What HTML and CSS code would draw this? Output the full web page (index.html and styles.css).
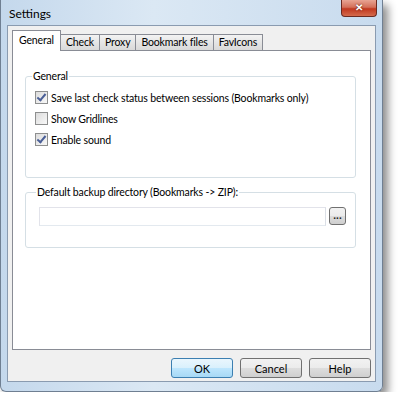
FILE: index.html
```html
<!DOCTYPE html>
<html lang="en">
<head>
  <meta charset="UTF-8" />
  <title>Settings</title>
  <link rel="stylesheet" href="styles.css">
</head>
<body>
  <div class="window">
    <div class="titlebar">
      <span class="title">Settings</span>
      <button class="close">&#x2715;</button>
    </div>
    <div class="client">
      <div class="tabs">
        <div class="tab active">General</div>
        <div class="tab">Check</div>
        <div class="tab">Proxy</div>
        <div class="tab">Bookmark files</div>
        <div class="tab">FavIcons</div>
      </div>
      <div class="panel">
        <fieldset class="group general">
          <legend>General</legend>
          <div class="checks">
            <label class="check"><span class="box on"></span>Save last check status between sessions (Bookmarks only)</label>
            <label class="check"><span class="box"></span>Show Gridlines</label>
            <label class="check"><span class="box on"></span>Enable sound</label>
          </div>
        </fieldset>
        <fieldset class="group backup">
          <legend>Default backup directory (Bookmarks -&gt; ZIP):</legend>
          <div class="dir-row">
            <div class="field"></div>
            <button class="browse">...</button>
          </div>
        </fieldset>
      </div>
      <div class="actions">
        <button class="btn default">OK</button>
        <button class="btn">Cancel</button>
        <button class="btn">Help</button>
      </div>
    </div>
  </div>
</body>
</html>
```

FILE: styles.css
```css
body {
  margin: 0;
  background: #fff;
  font-family: Lato, "Liberation Sans", sans-serif;
  font-size: 10.5px;
  letter-spacing: -0.15px;
  color: #000;
}
.window {
  width: 383px;
  height: 392px;
  box-sizing: border-box;
  background: linear-gradient(90deg, #c4d8ec 0, #dbe8f4 40%, #c8dbee 100%);
  border: 1px solid #6f7f92;
  border-top: none;
  border-radius: 0 0 6px 6px;
  box-shadow: 5px 5px 9px rgba(0, 0, 0, 0.45);
  display: flex;
  flex-direction: column;
}
.titlebar {
  height: 25px;
  display: flex;
  align-items: flex-start;
  justify-content: space-between;
  padding-left: 8px;
}
.title {
  margin-top: 6px;
  font-size: 12px;
  letter-spacing: 0;
}
.close {
  width: 36px;
  height: 17px;
  margin-right: 5px;
  border: 1px solid #6b2a20;
  border-top: none;
  border-radius: 0 0 4px 4px;
  background: linear-gradient(#e8a493 0, #d4705a 45%, #c1381f 55%, #d46a4c 100%);
  color: #fff;
  font-size: 10px;
  font-weight: bold;
  line-height: 14px;
  padding: 0;
  text-shadow: 0 0 2px #4a1006;
}
.client {
  margin: 0 6px;
  height: 357px;
  box-sizing: border-box;
  background: #f0f0f0;
  border: 1px solid #8a9bb0;
  padding: 4px 4px 0 4px;
  display: flex;
  flex-direction: column;
}
.tabs {
  display: flex;
  align-items: flex-end;
  height: 20px;
  position: relative;
  z-index: 1;
}
.tab {
  height: 16px;
  box-sizing: border-box;
  padding: 0 5px;
  border: 1px solid #898c95;
  border-bottom: none;
  margin-left: -1px;
  background: linear-gradient(#f3f3f3, #e5e5e5 50%, #d9d9d9);
  line-height: 15px;
}
.tab:first-child {
  margin-left: 0;
}
.tab.active {
  height: 21px;
  margin-bottom: -1px;
  background: #fff;
  padding: 0 6px;
  line-height: 18px;
}
.panel {
  height: 300px;
  box-sizing: border-box;
  background: #fff;
  border: 1px solid #898c95;
  padding: 19px 14px 0 12px;
  display: flex;
  flex-direction: column;
  gap: 8px;
}
.group {
  margin: 0;
  border: 1px solid #d5dfe5;
  border-radius: 3px;
  padding: 0 0 0 9px;
}
.group legend {
  padding: 0 1px;
  margin-left: -3px;
}
.general {
  height: 108px;
  box-sizing: border-box;
}
.checks {
  display: flex;
  flex-direction: column;
  padding-top: 5px;
}
.check {
  display: flex;
  align-items: center;
  gap: 3px;
  height: 21px;
}
.box {
  width: 11px;
  height: 11px;
  border: 1px solid #8e8f8f;
  background: linear-gradient(135deg, #dcdcdc, #f8f8f8);
  position: relative;
}
.box.on::after {
  content: "";
  position: absolute;
  left: 3px;
  top: 0;
  width: 3px;
  height: 7px;
  border: solid #4a5f97;
  border-width: 0 2px 2px 0;
  transform: rotate(40deg);
}
.backup {
  height: 62px;
  box-sizing: border-box;
  padding: 9px 9px 0 13px;
}
.dir-row {
  display: flex;
  gap: 3px;
}
.field {
  flex: 1;
  height: 19px;
  border: 1px solid #abadb3;
  border-top-color: #e2e3ea;
  border-left-color: #e2e3ea;
  border-right-color: #dbdfe6;
  border-bottom-color: #e3e9ef;
  box-sizing: border-box;
  background: #fff;
}
.browse {
  width: 17px;
  height: 18px;
  padding: 0;
  border: 1px solid #707070;
  border-radius: 3px;
  background: linear-gradient(#f2f2f2, #ebebeb 50%, #dddddd 51%, #cfcfcf);
  font-size: 10px;
  line-height: 10px;
  font-weight: bold;
  color: #222;
}
.actions {
  display: flex;
  justify-content: flex-end;
  gap: 7px;
  padding: 8px 0 0 0;
}
.btn {
  width: 62px;
  height: 20px;
  padding: 0;
  border: 1px solid #707070;
  border-radius: 3px;
  background: linear-gradient(#f2f2f2, #ebebeb 50%, #dddddd 51%, #cfcfcf);
  font-family: Lato, "Liberation Sans", sans-serif;
  font-size: 11px;
  color: #000;
}
.btn.default {
  border-color: #3c7fb1;
  background: linear-gradient(#eaf6fd, #d9f0fc 50%, #bee6fd 51%, #a7d9f5);
}
```
